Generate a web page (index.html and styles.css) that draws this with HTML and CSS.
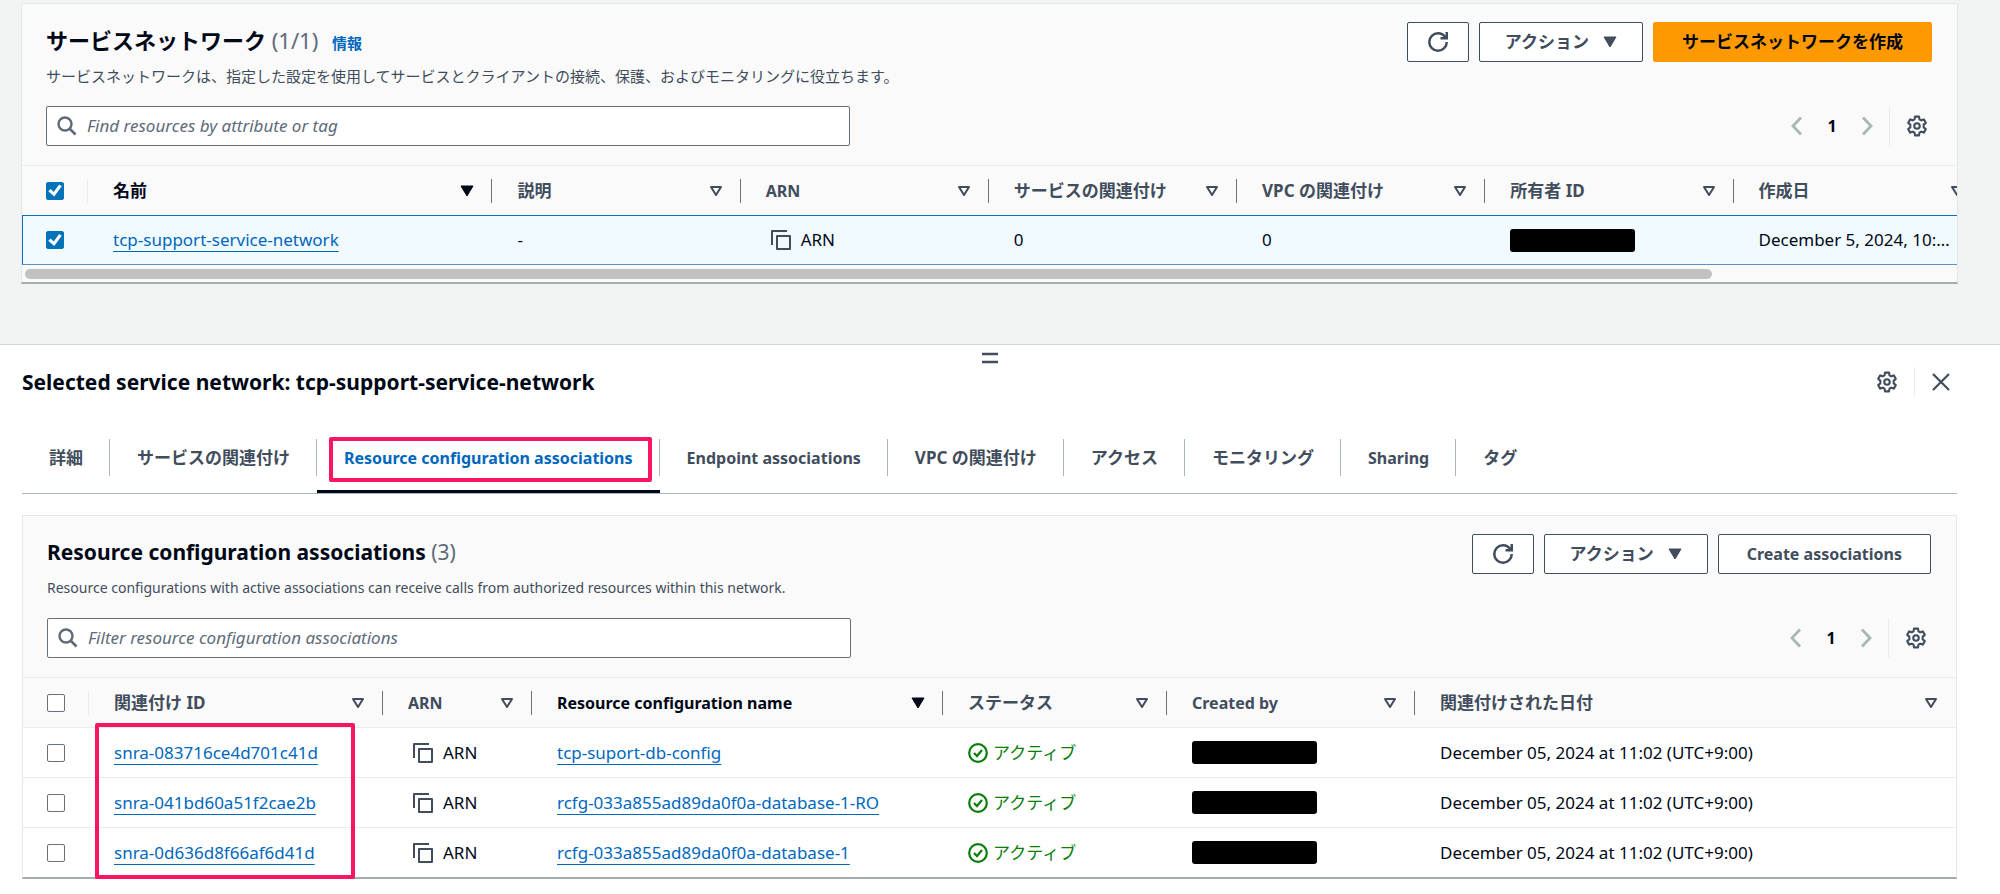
FILE: index.html
```html
<!DOCTYPE html>
<html lang="ja">
<head>
<meta charset="utf-8">
<meta name="viewport" content="width=device-width, initial-scale=1">
<title>サービスネットワーク</title>
<link rel="stylesheet" href="styles.css">
</head>
<body>
<svg class="sprite" aria-hidden="true">
  <symbol id="i-refresh" viewBox="0 0 16 16"><path d="M10 5h5V0M15 8a7 7 0 1 1-7-7c2.500 0 4.800 1.500 6.200 3.800" fill="none" stroke="currentColor" stroke-width="2"/></symbol>
  <symbol id="i-down" viewBox="0 0 14 12"><path d="M1 1h12L7 11z" fill="currentColor" stroke="currentColor" stroke-linejoin="round"/></symbol>
  <symbol id="i-sort" viewBox="0 0 14 12"><path d="M2 2h10L7 10z" fill="none" stroke="currentColor" stroke-width="2" stroke-linejoin="round"/></symbol>
  <symbol id="i-search" viewBox="0 0 20 20"><circle cx="8" cy="8" r="6.500" fill="none" stroke="currentColor" stroke-width="2.400"/><path d="M12.500 12.500 18.500 18.500" fill="none" stroke="currentColor" stroke-width="2.600"/></symbol>
  <symbol id="i-prev" viewBox="0 0 12 20"><path d="M10 1.500 2 10l8 8.500" fill="none" stroke="currentColor" stroke-width="2.800"/></symbol>
  <symbol id="i-next" viewBox="0 0 12 20"><path d="m2 1.500 8 8.500-8 8.500" fill="none" stroke="currentColor" stroke-width="2.800"/></symbol>
  <symbol id="i-gear" viewBox="0 0 24 24"><path d="M9.800 1.800h4.400l.5 2.900 1.900 1.100 2.800-1 2.200 3.800-2.300 1.900v3l2.300 1.900-2.200 3.800-2.800-1-1.900 1.100-.5 2.900H9.800l-.5-2.900-1.900-1.100-2.800 1-2.200-3.800 2.300-1.900v-3L2.400 8.600l2.200-3.800 2.800 1 1.900-1.100z" fill="none" stroke="currentColor" stroke-width="2.300" stroke-linejoin="round"/><circle cx="12" cy="12" r="3" fill="none" stroke="currentColor" stroke-width="2.300"/></symbol>
  <symbol id="i-close" viewBox="0 0 20 20"><path d="m2 2 16 16M18 2 2 18" fill="none" stroke="currentColor" stroke-width="2.200"/></symbol>
  <symbol id="i-copy" viewBox="0 0 20 20"><path d="M1 15V1h15M6 6h13v13H6z" fill="none" stroke="currentColor" stroke-width="2" stroke-linejoin="round"/></symbol>
  <symbol id="i-ok" viewBox="0 0 20 20"><circle cx="10" cy="10" r="8.800" fill="none" stroke="currentColor" stroke-width="2.200"/><path d="m6 10 3 3 5-6" fill="none" stroke="currentColor" stroke-width="2.200"/></symbol>
  <symbol id="i-grip" viewBox="0 0 16 12"><path d="M0 2h16M0 10h16" fill="none" stroke="currentColor" stroke-width="2.400"/></symbol>
</svg>

<main class="page">
  <section class="panel">
    <header class="panel-head">
      <div class="title-row">
        <div class="titles">
          <h1 class="title ja-title">サービスネットワーク <span class="count">(1/1)</span> <a class="info" href="#info">情報</a></h1>
          <p class="desc">サービスネットワークは、指定した設定を使用してサービスとクライアントの接続、保護、およびモニタリングに役立ちます。</p>
        </div>
        <div class="actions">
          <button class="btn btn-icon" type="button" aria-label="更新"><svg class="ico-20"><use href="#i-refresh"/></svg></button>
          <button class="btn ja" type="button">アクション<svg class="ico-down"><use href="#i-down"/></svg></button>
          <button class="btn btn-wide btn-primary ja" type="button">サービスネットワークを作成</button>
        </div>
      </div>
      <div class="filter-row">
        <label class="search"><svg class="ico-20"><use href="#i-search"/></svg><input type="text" aria-label="Find resources" placeholder="Find resources by attribute or tag"></label>
        <nav class="pager">
          <button class="bare dim" type="button" aria-label="前へ"><svg class="ico-chev"><use href="#i-prev"/></svg></button>
          <button class="bare page-no" type="button">1</button>
          <button class="bare dim" type="button" aria-label="次へ"><svg class="ico-chev"><use href="#i-next"/></svg></button>
          <span class="rule"></span>
          <button class="bare" type="button" aria-label="設定"><svg class="ico-gear"><use href="#i-gear"/></svg></button>
        </nav>
      </div>
    </header>
    <div class="scroller">
      <table class="grid networks">
        <colgroup><col class="c-check"><col class="c-name"><col class="c-std"><col class="c-std"><col class="c-std"><col class="c-std"><col class="c-std"><col class="c-std"><col class="c-std"></colgroup>
        <thead>
          <tr>
            <th class="check"><input type="checkbox" aria-label="すべて選択" checked></th>
            <th class="sorted"><div class="th"><span>名前</span><button class="bare" type="button" aria-label="並べ替え"><svg class="ico-down"><use href="#i-down"/></svg></button></div></th>
            <th><div class="th"><span>説明</span><button class="bare" type="button" aria-label="並べ替え"><svg class="ico-down"><use href="#i-sort"/></svg></button></div></th>
            <th><div class="th"><span class="en">ARN</span><button class="bare" type="button" aria-label="並べ替え"><svg class="ico-down"><use href="#i-sort"/></svg></button></div></th>
            <th><div class="th"><span>サービスの関連付け</span><button class="bare" type="button" aria-label="並べ替え"><svg class="ico-down"><use href="#i-sort"/></svg></button></div></th>
            <th><div class="th"><span>VPC の関連付け</span><button class="bare" type="button" aria-label="並べ替え"><svg class="ico-down"><use href="#i-sort"/></svg></button></div></th>
            <th><div class="th"><span>所有者 ID</span><button class="bare" type="button" aria-label="並べ替え"><svg class="ico-down"><use href="#i-sort"/></svg></button></div></th>
            <th><div class="th"><span>作成日</span><button class="bare" type="button" aria-label="並べ替え"><svg class="ico-down"><use href="#i-sort"/></svg></button></div></th>
            <th></th>
          </tr>
        </thead>
        <tbody>
          <tr class="selected">
            <td class="check"><input type="checkbox" aria-label="tcp-support-service-network" checked></td>
            <td><a class="link" href="#network">tcp-support-service-network</a></td>
            <td>-</td>
            <td><button class="bare copy" type="button"><svg class="ico-20"><use href="#i-copy"/></svg>ARN</button></td>
            <td>0</td>
            <td>0</td>
            <td><span class="redacted"></span></td>
            <td>December 5, 2024, 10:…</td>
            <td></td>
          </tr>
        </tbody>
      </table>
    </div>
    <div class="track"><div class="thumb"></div></div>
  </section>
</main>

<section class="split">
  <button class="bare grip" type="button" aria-label="サイズ変更"><svg class="ico-grip"><use href="#i-grip"/></svg></button>
  <header class="split-head">
    <h2 class="title">Selected service network: tcp-support-service-network</h2>
    <div class="split-tools">
      <button class="bare" type="button" aria-label="設定"><svg class="ico-gear"><use href="#i-gear"/></svg></button>
      <span class="rule"></span>
      <button class="bare" type="button" aria-label="閉じる"><svg class="ico-20"><use href="#i-close"/></svg></button>
    </div>
  </header>
  <nav class="tabs">
    <a class="tab" href="#t1">詳細</a>
    <a class="tab" href="#t2">サービスの関連付け</a>
    <a class="tab en active" href="#t3">Resource configuration associations<span class="mark mark-tab"></span></a>
    <a class="tab en" href="#t4">Endpoint associations</a>
    <a class="tab" href="#t5">VPC の関連付け</a>
    <a class="tab" href="#t6">アクセス</a>
    <a class="tab" href="#t7">モニタリング</a>
    <a class="tab en" href="#t8">Sharing</a>
    <a class="tab" href="#t9">タグ</a>
  </nav>

  <section class="panel">
    <header class="panel-head">
      <div class="title-row">
        <div class="titles">
          <h3 class="title">Resource configuration associations <span class="count">(3)</span></h3>
          <p class="desc en">Resource configurations with active associations can receive calls from authorized resources within this network.</p>
        </div>
        <div class="actions">
          <button class="btn btn-icon" type="button" aria-label="更新"><svg class="ico-20"><use href="#i-refresh"/></svg></button>
          <button class="btn ja" type="button">アクション<svg class="ico-down"><use href="#i-down"/></svg></button>
          <button class="btn btn-wide" type="button">Create associations</button>
        </div>
      </div>
      <div class="filter-row">
        <label class="search"><svg class="ico-20"><use href="#i-search"/></svg><input type="text" aria-label="Filter associations" placeholder="Filter resource configuration associations"></label>
        <nav class="pager">
          <button class="bare dim" type="button" aria-label="前へ"><svg class="ico-chev"><use href="#i-prev"/></svg></button>
          <button class="bare page-no" type="button">1</button>
          <button class="bare dim" type="button" aria-label="次へ"><svg class="ico-chev"><use href="#i-next"/></svg></button>
          <span class="rule"></span>
          <button class="bare" type="button" aria-label="設定"><svg class="ico-gear"><use href="#i-gear"/></svg></button>
        </nav>
      </div>
    </header>
    <table class="grid assoc">
      <colgroup><col class="c-check"><col class="c-id"><col class="c-arn"><col class="c-config"><col class="c-status"><col class="c-std"><col></colgroup>
      <thead>
        <tr>
          <th class="check"><input type="checkbox" aria-label="すべて選択"></th>
          <th><div class="th"><span>関連付け ID</span><button class="bare" type="button" aria-label="並べ替え"><svg class="ico-down"><use href="#i-sort"/></svg></button></div></th>
          <th><div class="th"><span class="en">ARN</span><button class="bare" type="button" aria-label="並べ替え"><svg class="ico-down"><use href="#i-sort"/></svg></button></div></th>
          <th class="sorted"><div class="th"><span class="en">Resource configuration name</span><button class="bare" type="button" aria-label="並べ替え"><svg class="ico-down"><use href="#i-down"/></svg></button></div></th>
          <th><div class="th"><span>ステータス</span><button class="bare" type="button" aria-label="並べ替え"><svg class="ico-down"><use href="#i-sort"/></svg></button></div></th>
          <th><div class="th"><span class="en">Created by</span><button class="bare" type="button" aria-label="並べ替え"><svg class="ico-down"><use href="#i-sort"/></svg></button></div></th>
          <th><div class="th"><span>関連付けされた日付</span><button class="bare" type="button" aria-label="並べ替え"><svg class="ico-down"><use href="#i-sort"/></svg></button></div></th>
        </tr>
      </thead>
      <tbody>
        <tr>
          <td class="check"><input type="checkbox" aria-label="snra-083716ce4d701c41d"></td>
          <td><a class="link" href="#a1">snra-083716ce4d701c41d</a></td>
          <td><button class="bare copy" type="button"><svg class="ico-20"><use href="#i-copy"/></svg>ARN</button></td>
          <td><a class="link" href="#r1">tcp-suport-db-config</a></td>
          <td><span class="status"><svg class="ico-20"><use href="#i-ok"/></svg>アクティブ</span></td>
          <td><span class="redacted"></span></td>
          <td>December 05, 2024 at 11:02 (UTC+9:00)</td>
        </tr>
        <tr>
          <td class="check"><input type="checkbox" aria-label="snra-041bd60a51f2cae2b"></td>
          <td><a class="link" href="#a2">snra-041bd60a51f2cae2b</a></td>
          <td><button class="bare copy" type="button"><svg class="ico-20"><use href="#i-copy"/></svg>ARN</button></td>
          <td><a class="link" href="#r2">rcfg-033a855ad89da0f0a-database-1-RO</a></td>
          <td><span class="status"><svg class="ico-20"><use href="#i-ok"/></svg>アクティブ</span></td>
          <td><span class="redacted"></span></td>
          <td>December 05, 2024 at 11:02 (UTC+9:00)</td>
        </tr>
        <tr>
          <td class="check"><input type="checkbox" aria-label="snra-0d636d8f66af6d41d"></td>
          <td><a class="link" href="#a3">snra-0d636d8f66af6d41d</a></td>
          <td><button class="bare copy" type="button"><svg class="ico-20"><use href="#i-copy"/></svg>ARN</button></td>
          <td><a class="link" href="#r3">rcfg-033a855ad89da0f0a-database-1</a></td>
          <td><span class="status"><svg class="ico-20"><use href="#i-ok"/></svg>アクティブ</span></td>
          <td><span class="redacted"></span></td>
          <td>December 05, 2024 at 11:02 (UTC+9:00)</td>
        </tr>
      </tbody>
    </table>
    <span class="mark mark-ids"></span>
  </section>
</section>
</body>
</html>
```

FILE: styles.css
```css
:root {
  --ink: #000716;
  --muted: #414d5c;
  --soft: #5f6b7a;
  --link: #0067be;
  --line: #eaeded;
  --pink: #fa1464;
}
* { box-sizing: border-box; }
body {
  margin: 0;
  background: #fff;
  color: var(--ink);
  font: 17px/24px "Noto Sans", "Noto Sans CJK JP", sans-serif;
}
h1, h2, h3, p { margin: 0; }
a { text-decoration: none; }
svg { display: block; flex: none; }
.sprite { position: absolute; width: 0; height: 0; }
.ico-20 { width: 20px; height: 20px; }
.ico-down { width: 14px; height: 12px; }
.ico-chev { width: 12px; height: 20px; }
.ico-gear { width: 22px; height: 22px; }
.ico-grip { width: 16px; height: 12px; }

.page { background: #f2f3f3; padding: 3px 42px 60px 21px; }
.panel {
  position: relative;
  background: #fafafa;
  border: 1px solid #e3e8e8;
  border-bottom: 2px solid #a4adad;
}
.panel-head { padding: 18px 25px 19px 24px; }
.title-row { display: flex; justify-content: space-between; align-items: flex-start; gap: 24px; }
.title { font-size: 21px; line-height: 36px; font-weight: 700; }
.ja-title { font-size: 22px; }
.count { color: var(--soft); font-weight: 400; }
.info { color: var(--link); font-size: 15px; line-height: 16px; margin-left: 8px; }
.desc { color: var(--muted); font-size: 15px; line-height: 24px; margin-top: 6px; }
.desc.en { font-size: 14px; }
.actions { display: flex; gap: 10px; }
.btn {
  display: flex; align-items: center; justify-content: center; gap: 14px;
  height: 40px; padding: 0 25px;
  background: #fff; color: var(--muted);
  border: 1px solid var(--muted); border-radius: 2px;
  font: 700 16px/24px "Noto Sans", "Noto Sans CJK JP", sans-serif;
}
.btn.ja { font-size: 17px; }
.btn-wide { padding: 0 28px; }
.btn-icon { width: 62px; padding: 0; }
.btn-primary { background: #ff9900; border-color: #ff9900; color: var(--ink); }
.bare {
  display: flex; align-items: center; justify-content: center;
  padding: 0; border: 0; background: none; color: var(--muted); font: inherit;
}
.filter-row { display: flex; justify-content: space-between; align-items: center; gap: 24px; margin-top: 18px; }
.search {
  display: flex; align-items: center; gap: 10px;
  flex: 0 1 804px; height: 40px; padding: 0 10px;
  background: #fff; color: var(--soft);
  border: 1px solid #687078; border-radius: 2px;
}
.search input {
  flex: 1; min-width: 0; padding: 0; border: 0; outline: 0; background: none;
  color: var(--ink); font: inherit;
}
.search input::placeholder { color: var(--soft); font-style: italic; opacity: 1; }
.pager { display: flex; align-items: center; padding-right: 4px; }
.page-no { width: 58px; color: var(--ink); font-size: 16px; font-weight: 700; }
.dim { color: #aab7b8; }
.rule { width: 1px; height: 40px; background: var(--line); }
.pager .rule { margin: 0 16px; }

.scroller { overflow: hidden; }
.grid { width: 100%; table-layout: fixed; border-collapse: separate; border-spacing: 0; }
.networks { width: 2208px; }
.c-check { width: 66px; }
.c-name { width: 404px; }
.c-std { width: 248px; }
.c-id { width: 294px; }
.c-arn { width: 149px; }
.c-config { width: 411px; }
.c-status { width: 224px; }
.grid th, .grid td {
  height: 50px; padding: 0 0 0 25px; text-align: left; white-space: nowrap;
}
.grid th { border-top: 1px solid var(--line); color: var(--muted); font-weight: 700; }
.grid th .en { font-size: 16px; }
.grid th.sorted { color: var(--ink); }
.grid th.sorted .bare { color: var(--ink); }
.grid .check { padding-left: 24px; }
.th, th.check {
  background: linear-gradient(#687078, #687078) right center / 1px 24px no-repeat;
}
.th { display: flex; align-items: center; justify-content: space-between; padding-right: 18px; }
th.check { background-image: linear-gradient(var(--line), var(--line)); }
th:last-child .th { background: none; }
.grid td { border-top: 1px solid var(--line); background: #fff; }
.grid .selected td { background: #f1faff; border-top: 1px solid #0a70c4; border-bottom: 1px solid #5f8fcb; }
.grid .selected .check { border-left: 1px solid #0a70c4; padding-left: 23px; }
.link { color: var(--link); text-decoration: underline 1px; text-underline-offset: 5px; text-decoration-skip-ink: none; }
.copy { gap: 10px; margin-left: 5px; color: var(--ink); }
.copy svg { color: var(--muted); }
.status { display: flex; align-items: center; gap: 5px; color: #0a7d0c; }
.redacted { display: block; width: 125px; height: 23px; border-radius: 3px; background: #000; }
input[type="checkbox"] {
  appearance: none; display: block; width: 18px; height: 18px; margin: 0;
  background: #fff; border: 1px solid #687078; border-radius: 2px;
}
input[type="checkbox"]:checked { background: #0073bb; border-color: #0073bb; }
input[type="checkbox"]:checked::before {
  content: ""; display: block; width: 16px; height: 16px; background: #fff;
  clip-path: polygon(8% 54%, 23% 40%, 42% 60%, 76% 12%, 92% 24%, 45% 88%);
}
.track { padding: 4px 4px 3px 3px; }
.thumb { width: 87.5%; height: 10px; border-radius: 5px; background: #c1c1c1; }

.split { border-top: 1px solid #d0d6d6; padding: 7px 43px 16px 22px; }
.grip { margin: 0 auto; }
.split-head { display: flex; justify-content: space-between; align-items: center; }
.split-tools { display: flex; align-items: center; gap: 16px; padding-right: 6px; }
.split-tools .rule { height: 30px; }
.tabs { display: flex; height: 72px; margin: 22px 0 21px; border-bottom: 1px solid #aab7b8; }
.tab {
  position: relative; display: flex; align-items: center; padding: 0 27px;
  color: var(--muted); font-weight: 700; white-space: nowrap;
  background: linear-gradient(#aab7b8, #aab7b8) right center / 1px 37px no-repeat;
}
.tab.en { font-size: 16px; }
.tab:last-child { background: none; }
.tab.active { color: var(--link); box-shadow: inset 0 -3px var(--ink); }
.mark { position: absolute; border: 4px solid var(--pink); border-radius: 2px; pointer-events: none; }
.mark-tab { inset: 15px 8px 11px 12px; }
.mark-ids { left: 72px; bottom: -2px; width: 260px; height: 156px; }
```
